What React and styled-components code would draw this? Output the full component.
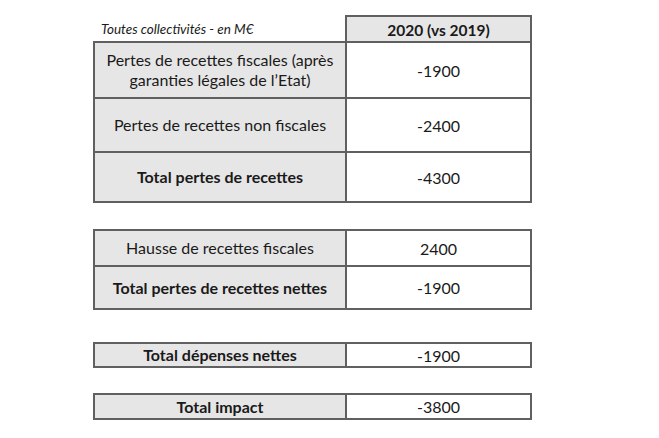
import React from 'react';
import styled, { createGlobalStyle } from 'styled-components';

const GlobalStyle = createGlobalStyle`
  html, body {
    margin: 0;
    padding: 0;
    background: #ffffff;
  }
  body {
    font-family: Lato, 'Open Sans', sans-serif;
    color: #1a1a1a;
  }
`;

const Page = styled.div`
  width: 659px;
  height: 438px;
  padding: 15px 0 0 93px;
  box-sizing: border-box;
  display: flex;
  flex-direction: column;
`;

const HeadRow = styled.div`
  display: grid;
  grid-template-columns: 252px 187px;
  height: 26px;
`;

const Caption = styled.div`
  font-style: italic;
  font-size: 13.5px;
  align-self: end;
  padding: 0 0 4px 8px;
`;

const YearCell = styled.div`
  background: #e7e6e6;
  border: 2px solid #606060;
  border-bottom: none;
  display: flex;
  align-items: center;
  justify-content: center;
  font-weight: 700;
  font-size: 15.5px;
  padding-top: 1px;
`;

const Group = styled.div`
  width: 439px;
  box-sizing: border-box;
  border: 2px solid #606060;
  margin-top: ${(p) => p.$gap || 0}px;
  display: flex;
  flex-direction: column;
`;

const Row = styled.div`
  display: grid;
  grid-template-columns: 250px 185px;
  height: ${(p) => p.$h}px;
  border-top: ${(p) => (p.$first ? 'none' : '2px solid #606060')};
`;

const Label = styled.div`
  background: #e7e6e6;
  display: flex;
  align-items: center;
  justify-content: center;
  text-align: center;
  font-size: 16px;
  line-height: 20px;
  font-weight: ${(p) => (p.$bold ? 700 : 400)};
  padding: 0 6px;
`;

const Value = styled.div`
  border-left: 2px solid #606060;
  display: flex;
  align-items: center;
  justify-content: center;
  font-size: 16px;
`;

const groups = [
  {
    gap: 0,
    rows: [
      { label: 'Pertes de recettes fiscales (après garanties légales de l’Etat)', value: '-1900', h: 54 },
      { label: 'Pertes de recettes non fiscales', value: '-2400', h: 52 },
      { label: 'Total pertes de recettes', value: '-4300', h: 48, bold: true },
    ],
  },
  {
    gap: 26,
    rows: [
      { label: 'Hausse de recettes fiscales', value: '2400', h: 34 },
      { label: 'Total pertes de recettes nettes', value: '-1900', h: 41, bold: true },
    ],
  },
  {
    gap: 32,
    rows: [{ label: 'Total dépenses nettes', value: '-1900', h: 22, bold: true }],
  },
  {
    gap: 25,
    rows: [{ label: 'Total impact', value: '-3800', h: 23, bold: true }],
  },
];

export default function App() {
  return (
    <>
      <GlobalStyle />
      <Page>
        <HeadRow>
          <Caption>Toutes collectivités - en M€</Caption>
          <YearCell>2020 (vs 2019)</YearCell>
        </HeadRow>
        {groups.map((g, gi) => (
          <Group key={gi} $gap={g.gap}>
            {g.rows.map((r, ri) => (
              <Row key={ri} $h={r.h} $first={ri === 0}>
                <Label $bold={r.bold}>{r.label}</Label>
                <Value>{r.value}</Value>
              </Row>
            ))}
          </Group>
        ))}
      </Page>
    </>
  );
}
